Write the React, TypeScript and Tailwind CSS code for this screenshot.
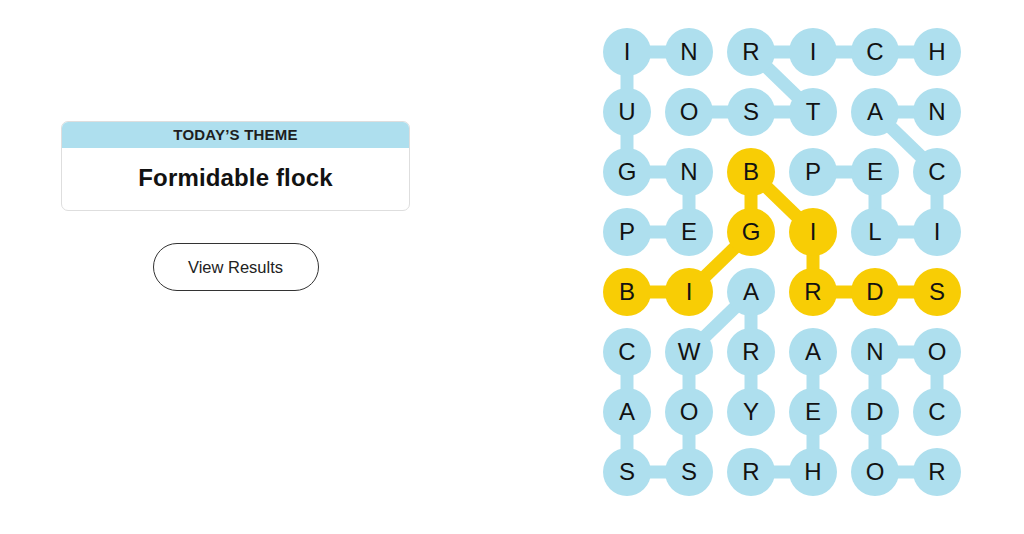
import React from "react";

const GRID = [
  "INRICH",
  "UOSTAN",
  "GNBPEC",
  "PEGILI",
  "BIARDS",
  "CWRANO",
  "AOYEDC",
  "SSRHOR",
];

type P = [number, number];

const blueWords: P[][] = [
  [[3, 0], [3, 1], [2, 1], [2, 0], [1, 0], [0, 0], [0, 1]],
  [[1, 1], [1, 2], [1, 3], [0, 2], [0, 3], [0, 4], [0, 5]],
  [[2, 3], [2, 4], [3, 4], [3, 5], [2, 5], [1, 4], [1, 5]],
  [[5, 0], [6, 0], [7, 0], [7, 1], [6, 1], [5, 1], [4, 2], [5, 2], [6, 2]],
  [[6, 5], [5, 5], [5, 4], [6, 4], [7, 4], [7, 5]],
  [[7, 2], [7, 3], [6, 3], [5, 3]],
];
const spangram: P[] = [[4, 0], [4, 1], [3, 2], [2, 2], [3, 3], [4, 3], [4, 4], [4, 5]];

const BLUE = "#aedfee";
const YELLOW = "#f8cd05";

const cx = (c: number) => 24 + 62 * c;
const cy = (r: number) => 24 + 60 * r;

function segs(path: P[]) {
  const out: [P, P][] = [];
  for (let i = 0; i < path.length - 1; i++) out.push([path[i], path[i + 1]]);
  return out;
}

const yellowSet = new Set(spangram.map(([r, c]) => `${r}-${c}`));

export default function App() {
  return (
    <div className="flex h-[534px] w-full overflow-hidden bg-white font-['Liberation_Sans',Arial,sans-serif] text-[#121212]">
      <div className="ml-[61px] mt-[121px] flex w-[349px] flex-col items-center">
        <div className="w-full overflow-hidden rounded-[7px] border border-[#dedede]">
          <div className="flex h-[26px] items-center justify-center bg-[#aedfee] text-[15px] font-bold uppercase tracking-[0.2px] text-[#1e1e1e]">
            Today’s Theme
          </div>
          <div className="flex h-[62px] items-center justify-center pb-[2px] text-[24px] font-bold tracking-[0.15px]">
            Formidable flock
          </div>
        </div>
        <button className="mt-[32px] flex h-[48px] w-[166px] items-center justify-center rounded-full border-[1.5px] border-[#333] text-[16.5px] text-[#222]">
          View Results
        </button>
      </div>
      <div className="relative ml-[193px] mt-[28px] h-[468px] w-[358px]">
        <svg className="absolute left-0 top-0" width={358} height={468}>
          {blueWords.flatMap((w, wi) =>
            segs(w).map(([a, b], i) => (
              <line
                key={`b${wi}-${i}`}
                x1={cx(a[1])}
                y1={cy(a[0])}
                x2={cx(b[1])}
                y2={cy(b[0])}
                stroke={BLUE}
                strokeWidth={13}
              />
            ))
          )}
          {segs(spangram).map(([a, b], i) => (
            <line
              key={`y${i}`}
              x1={cx(a[1])}
              y1={cy(a[0])}
              x2={cx(b[1])}
              y2={cy(b[0])}
              stroke={YELLOW}
              strokeWidth={13}
            />
          ))}
        </svg>
        <div className="relative grid grid-cols-[repeat(6,48px)] gap-x-[14px] gap-y-[12px]">
          {GRID.flatMap((row, r) =>
            row.split("").map((ch, c) => {
              const y = yellowSet.has(`${r}-${c}`);
              return (
                <div
                  key={`${r}-${c}`}
                  className={`flex h-[48px] w-[48px] items-center justify-center rounded-full text-[24px] leading-none ${
                    y ? "bg-[#f8cd05]" : "bg-[#aedfee]"
                  }`}
                >
                  {ch}
                </div>
              );
            })
          )}
        </div>
      </div>
    </div>
  );
}
